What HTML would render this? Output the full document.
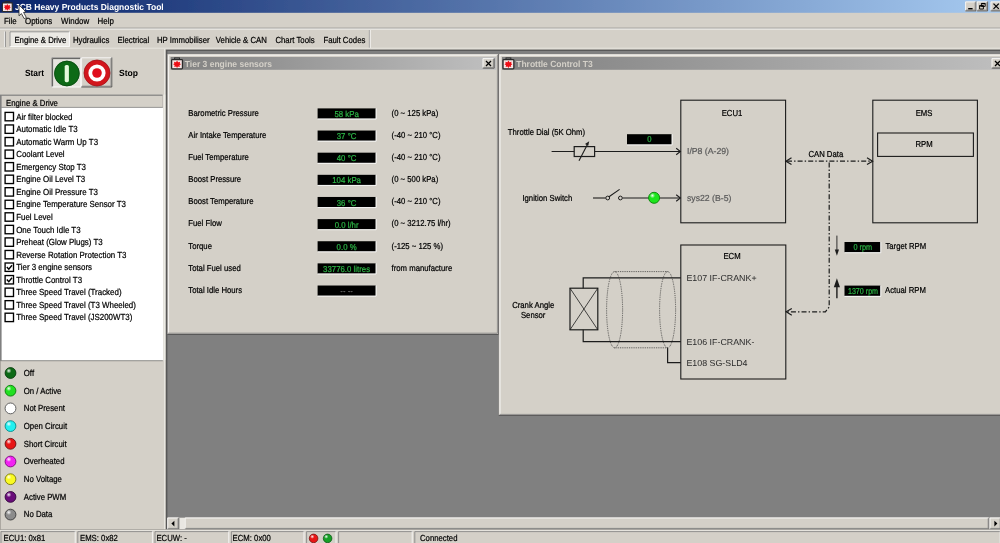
<!DOCTYPE html>
<html><head><meta charset="utf-8"><title>JCB Heavy Products Diagnostic Tool</title>
<style>html,body{margin:0;padding:0;background:#d4d0c8;overflow:hidden}svg{display:block}text{font-family:"Liberation Sans",sans-serif;white-space:pre}</style></head>
<body>
<svg width="1000" height="543" viewBox="0 0 1000 543" text-rendering="geometricPrecision">
<defs><linearGradient id="gt" x1="0" x2="1" y1="0" y2="0"><stop offset="0" stop-color="#0a246a"/><stop offset="1" stop-color="#a6caf0"/></linearGradient><linearGradient id="gi" x1="0" x2="1" y1="0" y2="0"><stop offset="0" stop-color="#808080"/><stop offset="1" stop-color="#c0c0c0"/></linearGradient><radialGradient id="hl" cx=".33" cy=".28" r=".26"><stop offset="0" stop-color="#fff" stop-opacity=".95"/><stop offset="1" stop-color="#fff" stop-opacity="0"/></radialGradient><filter id="b1" x="0" y="0" width="1000" height="543" filterUnits="userSpaceOnUse"><feGaussianBlur stdDeviation=".35"/></filter></defs>
<g filter="url(#b1)">
<rect x="0.00" y="0.00" width="1000.00" height="543.00" fill="#d4d0c8" />
<rect x="0.00" y="0.00" width="1000.00" height="12.80" fill="url(#gt)" />
<g transform="translate(1.80,1.00) scale(0.97)"><rect x="3.4" y=".5" width="4.6" height="2" fill="none" stroke="#2a2a2a" stroke-width=".9"/><rect x=".6" y="2" width="10.2" height="8.8" rx=".8" fill="#f7e6e6" stroke="#2a2a2a" stroke-width="1.2"/><path d="M5.7,3 L6.7,4.6 L8.7,4 L8.2,5.6 L9.4,6.5 L8,7.3 L8.3,9 L6.6,8.5 L5.7,10 L4.8,8.5 L3.1,9 L3.4,7.3 L2,6.5 L3.2,5.6 L2.7,4 L4.7,4.6 Z" fill="#ee1118"/></g>
<text transform="translate(15.00,9.80) scale(0.955,1)" font-size="8.9" fill="#fff" text-anchor="start" font-weight="bold" >JCB Heavy Products Diagnostic Tool</text>
<rect x="965.20" y="1.50" width="11.20" height="9.80" fill="#d4d0c8" />
<path d="M965.60,11.30 V1.90 H976.40" stroke="#ffffff" stroke-width=".8" fill="none"/>
<path d="M965.20,10.90 H976.00 V1.50" stroke="#404040" stroke-width=".8" fill="none"/>
<path d="M966.00,10.10 H975.20 V2.30" stroke="#808080" stroke-width=".8" fill="none"/>
<rect x="976.80" y="1.50" width="11.20" height="9.80" fill="#d4d0c8" />
<path d="M977.20,11.30 V1.90 H988.00" stroke="#ffffff" stroke-width=".8" fill="none"/>
<path d="M976.80,10.90 H987.60 V1.50" stroke="#404040" stroke-width=".8" fill="none"/>
<path d="M977.60,10.10 H986.80 V2.30" stroke="#808080" stroke-width=".8" fill="none"/>
<rect x="990.60" y="1.50" width="11.20" height="9.80" fill="#d4d0c8" />
<path d="M991.00,11.30 V1.90 H1001.80" stroke="#ffffff" stroke-width=".8" fill="none"/>
<path d="M990.60,10.90 H1001.40 V1.50" stroke="#404040" stroke-width=".8" fill="none"/>
<path d="M991.40,10.10 H1000.60 V2.30" stroke="#808080" stroke-width=".8" fill="none"/>
<line x1="968.20" y1="8.70" x2="972.60" y2="8.70" stroke="#000" stroke-width="1.4" />
<path d="M981.4,3.4h3.8v3h-3.8z M979.6,5.6h3.8v3.4h-3.8z" fill="#d4d0c8" stroke="#000" stroke-width=".9"/><path d="M981.4,3.6h3.8 M979.6,5.8h3.8" stroke="#000" stroke-width="1.2"/>
<path d="M993.5,3.6 l5.3,5.3 M998.8,3.6 l-5.3,5.3" stroke="#000" stroke-width="1.3" fill="none"/>
<text transform="translate(4.00,23.62) scale(0.9,1)" font-size="8.8" fill="#000" text-anchor="start" stroke="#000" stroke-width=".22" >File</text>
<text transform="translate(25.00,23.62) scale(0.9,1)" font-size="8.8" fill="#000" text-anchor="start" stroke="#000" stroke-width=".22" >Options</text>
<text transform="translate(61.00,23.62) scale(0.9,1)" font-size="8.8" fill="#000" text-anchor="start" stroke="#000" stroke-width=".22" >Window</text>
<text transform="translate(97.60,23.62) scale(0.9,1)" font-size="8.8" fill="#000" text-anchor="start" stroke="#000" stroke-width=".22" >Help</text>
<line x1="0.00" y1="28.20" x2="1000.00" y2="28.20" stroke="#808080" stroke-width="0.8" />
<line x1="0.00" y1="29.00" x2="1000.00" y2="29.00" stroke="#ffffff" stroke-width="0.8" />
<line x1="4.60" y1="31.50" x2="4.60" y2="47.00" stroke="#ffffff" stroke-width="0.8" />
<line x1="5.40" y1="31.50" x2="5.40" y2="47.00" stroke="#808080" stroke-width="0.8" />
<rect x="9.60" y="31.40" width="60.20" height="15.40" fill="#ebe9e4" />
<path d="M10,46.8 V31.8 H69.8" stroke="#808080" stroke-width=".8" fill="none"/>
<path d="M9.6,46.6 H69.4 V31.4" stroke="#fff" stroke-width=".8" fill="none"/>
<text transform="translate(14.40,43.32) scale(0.885,1)" font-size="8.8" fill="#000" text-anchor="start" stroke="#000" stroke-width=".22" >Engine &amp; Drive</text>
<text transform="translate(73.00,43.32) scale(0.885,1)" font-size="8.8" fill="#000" text-anchor="start" stroke="#000" stroke-width=".22" >Hydraulics</text>
<text transform="translate(117.60,43.32) scale(0.885,1)" font-size="8.8" fill="#000" text-anchor="start" stroke="#000" stroke-width=".22" >Electrical</text>
<text transform="translate(157.00,43.32) scale(0.885,1)" font-size="8.8" fill="#000" text-anchor="start" stroke="#000" stroke-width=".22" >HP Immobiliser</text>
<text transform="translate(215.80,43.32) scale(0.885,1)" font-size="8.8" fill="#000" text-anchor="start" stroke="#000" stroke-width=".22" >Vehicle &amp; CAN</text>
<text transform="translate(275.40,43.32) scale(0.885,1)" font-size="8.8" fill="#000" text-anchor="start" stroke="#000" stroke-width=".22" >Chart Tools</text>
<text transform="translate(323.40,43.32) scale(0.885,1)" font-size="8.8" fill="#000" text-anchor="start" stroke="#000" stroke-width=".22" >Fault Codes</text>
<line x1="369.40" y1="30.00" x2="369.40" y2="48.00" stroke="#808080" stroke-width="0.8" />
<line x1="370.20" y1="30.00" x2="370.20" y2="48.00" stroke="#ffffff" stroke-width="0.8" />
<line x1="0.00" y1="48.20" x2="1000.00" y2="48.20" stroke="#eceae4" stroke-width="0.8" />
<text transform="translate(25.00,75.54) scale(0.93,1)" font-size="9" fill="#000" text-anchor="start" font-weight="bold" >Start</text>
<text transform="translate(119.00,75.54) scale(0.95,1)" font-size="9" fill="#000" text-anchor="start" font-weight="bold" >Stop</text>
<rect x="51.40" y="57.40" width="29.80" height="30.00" fill="#e6e4df" />
<path d="M51.80,87.40 V57.80 H81.20" stroke="#808080" stroke-width=".8" fill="none"/>
<path d="M52.60,86.60 V58.60 H80.40" stroke="#404040" stroke-width=".8" fill="none"/>
<path d="M51.40,87.00 H80.80 V57.40" stroke="#ffffff" stroke-width=".8" fill="none"/>
<rect x="81.20" y="57.40" width="31.00" height="30.00" fill="#d4d0c8" />
<path d="M81.60,87.40 V57.80 H112.20" stroke="#ffffff" stroke-width=".8" fill="none"/>
<path d="M81.20,87.00 H111.80 V57.40" stroke="#404040" stroke-width=".8" fill="none"/>
<path d="M82.00,86.20 H111.00 V58.20" stroke="#808080" stroke-width=".8" fill="none"/>
<circle cx="66.9" cy="73.5" r="12.7" fill="#0f6a17"/>
<circle cx="66.9" cy="73.5" r="12.3" fill="none" stroke="#0a4a10" stroke-width=".8"/>
<rect x="64.70" y="65.00" width="4.20" height="17.20" fill="#e4fadc" rx="1.6"/>
<circle cx="97" cy="73" r="13" fill="#d2141c" stroke="#a01016" stroke-width=".8"/>
<circle cx="97" cy="73" r="8.6" fill="#fff"/>
<circle cx="97" cy="73" r="4.8" fill="#e0101a"/>
<rect x="0.00" y="94.60" width="162.60" height="266.60" fill="#808080" />
<rect x="1.60" y="95.80" width="161.00" height="11.60" fill="#d4d0c8" />
<line x1="1.60" y1="107.40" x2="162.60" y2="107.40" stroke="#808080" stroke-width="0.8" />
<rect x="1.60" y="107.80" width="161.60" height="252.60" fill="#fff" />
<rect x="163.20" y="94.60" width="2.60" height="265.40" fill="#e6e4de" />
<line x1="164.60" y1="49.00" x2="164.60" y2="530.00" stroke="#efede8" stroke-width="0.8" />
<text transform="translate(6.00,105.62) scale(0.885,1)" font-size="8.8" fill="#000" text-anchor="start" stroke="#000" stroke-width=".22" >Engine &amp; Drive</text>
<rect x="5.1" y="112.40" width="8.4" height="8.4" fill="#fff" stroke="#000" stroke-width="1.35"/>
<text transform="translate(16.20,119.62) scale(0.9,1)" font-size="8.8" fill="#000" text-anchor="start" stroke="#000" stroke-width=".22" >Air filter blocked</text>
<rect x="5.1" y="124.95" width="8.4" height="8.4" fill="#fff" stroke="#000" stroke-width="1.35"/>
<text transform="translate(16.20,132.17) scale(0.9,1)" font-size="8.8" fill="#000" text-anchor="start" stroke="#000" stroke-width=".22" >Automatic Idle T3</text>
<rect x="5.1" y="137.50" width="8.4" height="8.4" fill="#fff" stroke="#000" stroke-width="1.35"/>
<text transform="translate(16.20,144.72) scale(0.9,1)" font-size="8.8" fill="#000" text-anchor="start" stroke="#000" stroke-width=".22" >Automatic Warm Up T3</text>
<rect x="5.1" y="150.05" width="8.4" height="8.4" fill="#fff" stroke="#000" stroke-width="1.35"/>
<text transform="translate(16.20,157.27) scale(0.9,1)" font-size="8.8" fill="#000" text-anchor="start" stroke="#000" stroke-width=".22" >Coolant Level</text>
<rect x="5.1" y="162.60" width="8.4" height="8.4" fill="#fff" stroke="#000" stroke-width="1.35"/>
<text transform="translate(16.20,169.82) scale(0.9,1)" font-size="8.8" fill="#000" text-anchor="start" stroke="#000" stroke-width=".22" >Emergency Stop T3</text>
<rect x="5.1" y="175.15" width="8.4" height="8.4" fill="#fff" stroke="#000" stroke-width="1.35"/>
<text transform="translate(16.20,182.37) scale(0.9,1)" font-size="8.8" fill="#000" text-anchor="start" stroke="#000" stroke-width=".22" >Engine Oil Level T3</text>
<rect x="5.1" y="187.70" width="8.4" height="8.4" fill="#fff" stroke="#000" stroke-width="1.35"/>
<text transform="translate(16.20,194.92) scale(0.9,1)" font-size="8.8" fill="#000" text-anchor="start" stroke="#000" stroke-width=".22" >Engine Oil Pressure T3</text>
<rect x="5.1" y="200.25" width="8.4" height="8.4" fill="#fff" stroke="#000" stroke-width="1.35"/>
<text transform="translate(16.20,207.47) scale(0.9,1)" font-size="8.8" fill="#000" text-anchor="start" stroke="#000" stroke-width=".22" >Engine Temperature Sensor T3</text>
<rect x="5.1" y="212.80" width="8.4" height="8.4" fill="#fff" stroke="#000" stroke-width="1.35"/>
<text transform="translate(16.20,220.02) scale(0.9,1)" font-size="8.8" fill="#000" text-anchor="start" stroke="#000" stroke-width=".22" >Fuel Level</text>
<rect x="5.1" y="225.35" width="8.4" height="8.4" fill="#fff" stroke="#000" stroke-width="1.35"/>
<text transform="translate(16.20,232.57) scale(0.9,1)" font-size="8.8" fill="#000" text-anchor="start" stroke="#000" stroke-width=".22" >One Touch Idle T3</text>
<rect x="5.1" y="237.90" width="8.4" height="8.4" fill="#fff" stroke="#000" stroke-width="1.35"/>
<text transform="translate(16.20,245.12) scale(0.9,1)" font-size="8.8" fill="#000" text-anchor="start" stroke="#000" stroke-width=".22" >Preheat (Glow Plugs) T3</text>
<rect x="5.1" y="250.45" width="8.4" height="8.4" fill="#fff" stroke="#000" stroke-width="1.35"/>
<text transform="translate(16.20,257.67) scale(0.9,1)" font-size="8.8" fill="#000" text-anchor="start" stroke="#000" stroke-width=".22" >Reverse Rotation Protection T3</text>
<rect x="5.1" y="263.00" width="8.4" height="8.4" fill="#fff" stroke="#000" stroke-width="1.35"/>
<path d="M6.8,267.00 l2,2.2 l3.2,-4" stroke="#000" stroke-width="1.4" fill="none"/>
<text transform="translate(16.20,270.22) scale(0.9,1)" font-size="8.8" fill="#000" text-anchor="start" stroke="#000" stroke-width=".22" >Tier 3 engine sensors</text>
<rect x="5.1" y="275.55" width="8.4" height="8.4" fill="#fff" stroke="#000" stroke-width="1.35"/>
<path d="M6.8,279.55 l2,2.2 l3.2,-4" stroke="#000" stroke-width="1.4" fill="none"/>
<text transform="translate(16.20,282.77) scale(0.9,1)" font-size="8.8" fill="#000" text-anchor="start" stroke="#000" stroke-width=".22" >Throttle Control T3</text>
<rect x="5.1" y="288.10" width="8.4" height="8.4" fill="#fff" stroke="#000" stroke-width="1.35"/>
<text transform="translate(16.20,295.32) scale(0.9,1)" font-size="8.8" fill="#000" text-anchor="start" stroke="#000" stroke-width=".22" >Three Speed Travel (Tracked)</text>
<rect x="5.1" y="300.65" width="8.4" height="8.4" fill="#fff" stroke="#000" stroke-width="1.35"/>
<text transform="translate(16.20,307.87) scale(0.9,1)" font-size="8.8" fill="#000" text-anchor="start" stroke="#000" stroke-width=".22" >Three Speed Travel (T3 Wheeled)</text>
<rect x="5.1" y="313.20" width="8.4" height="8.4" fill="#fff" stroke="#000" stroke-width="1.35"/>
<text transform="translate(16.20,320.42) scale(0.9,1)" font-size="8.8" fill="#000" text-anchor="start" stroke="#000" stroke-width=".22" >Three Speed Travel (JS200WT3)</text>
<line x1="0.00" y1="361.00" x2="163.00" y2="361.00" stroke="#8c8a84" stroke-width="0.8" />
<rect x="0.00" y="361.40" width="163.20" height="169.00" fill="#d4d0c8" />
<line x1="0.40" y1="361.00" x2="0.40" y2="530.00" stroke="#9a9892" stroke-width="0.8" />
<circle cx="10.5" cy="373.00" r="5.4" fill="#0f6a17" stroke="#063b0a" stroke-width=".9"/>
<circle cx="10.5" cy="373.00" r="5" fill="url(#hl)"/>
<text transform="translate(23.80,375.82) scale(0.885,1)" font-size="8.8" fill="#000" text-anchor="start" stroke="#000" stroke-width=".22" >Off</text>
<circle cx="10.5" cy="390.70" r="5.4" fill="#22e022" stroke="#0a7a0a" stroke-width=".9"/>
<circle cx="10.5" cy="390.70" r="5" fill="url(#hl)"/>
<text transform="translate(23.80,393.52) scale(0.885,1)" font-size="8.8" fill="#000" text-anchor="start" stroke="#000" stroke-width=".22" >On / Active</text>
<circle cx="10.5" cy="408.40" r="5.4" fill="#ffffff" stroke="#555" stroke-width=".9"/>
<circle cx="10.5" cy="408.40" r="5" fill="url(#hl)"/>
<text transform="translate(23.80,411.22) scale(0.885,1)" font-size="8.8" fill="#000" text-anchor="start" stroke="#000" stroke-width=".22" >Not Present</text>
<circle cx="10.5" cy="426.10" r="5.4" fill="#22f0f0" stroke="#0a8a8a" stroke-width=".9"/>
<circle cx="10.5" cy="426.10" r="5" fill="url(#hl)"/>
<text transform="translate(23.80,428.92) scale(0.885,1)" font-size="8.8" fill="#000" text-anchor="start" stroke="#000" stroke-width=".22" >Open Circuit</text>
<circle cx="10.5" cy="443.80" r="5.4" fill="#e81818" stroke="#6a0a0a" stroke-width=".9"/>
<circle cx="10.5" cy="443.80" r="5" fill="url(#hl)"/>
<text transform="translate(23.80,446.62) scale(0.885,1)" font-size="8.8" fill="#000" text-anchor="start" stroke="#000" stroke-width=".22" >Short Circuit</text>
<circle cx="10.5" cy="461.50" r="5.4" fill="#f222f2" stroke="#7a0a7a" stroke-width=".9"/>
<circle cx="10.5" cy="461.50" r="5" fill="url(#hl)"/>
<text transform="translate(23.80,464.32) scale(0.885,1)" font-size="8.8" fill="#000" text-anchor="start" stroke="#000" stroke-width=".22" >Overheated</text>
<circle cx="10.5" cy="479.20" r="5.4" fill="#fafa22" stroke="#7a7a0a" stroke-width=".9"/>
<circle cx="10.5" cy="479.20" r="5" fill="url(#hl)"/>
<text transform="translate(23.80,482.02) scale(0.885,1)" font-size="8.8" fill="#000" text-anchor="start" stroke="#000" stroke-width=".22" >No Voltage</text>
<circle cx="10.5" cy="496.90" r="5.4" fill="#6a0a7a" stroke="#30053a" stroke-width=".9"/>
<circle cx="10.5" cy="496.90" r="5" fill="url(#hl)"/>
<text transform="translate(23.80,499.72) scale(0.885,1)" font-size="8.8" fill="#000" text-anchor="start" stroke="#000" stroke-width=".22" >Active PWM</text>
<circle cx="10.5" cy="514.60" r="5.4" fill="#8c8c8c" stroke="#3a3a3a" stroke-width=".9"/>
<circle cx="10.5" cy="514.60" r="5" fill="url(#hl)"/>
<text transform="translate(23.80,517.42) scale(0.885,1)" font-size="8.8" fill="#000" text-anchor="start" stroke="#000" stroke-width=".22" >No Data</text>
<rect x="165.80" y="49.60" width="834.20" height="480.80" fill="#585858" />
<rect x="167.40" y="51.00" width="832.60" height="466.60" fill="#808080" />
<rect x="167.40" y="517.60" width="832.60" height="12.00" fill="#e9e7e2" />
<rect x="167.40" y="517.60" width="11.80" height="12.00" fill="#d4d0c8" />
<path d="M167.80,529.60 V518.00 H179.20" stroke="#ffffff" stroke-width=".8" fill="none"/>
<path d="M167.40,529.20 H178.80 V517.60" stroke="#404040" stroke-width=".8" fill="none"/>
<path d="M168.20,528.40 H178.00 V518.40" stroke="#808080" stroke-width=".8" fill="none"/>
<path d="M174.4,520.8 v5.6 l-3,-2.8z" fill="#000"/>
<rect x="184.80" y="517.60" width="804.60" height="12.00" fill="#d4d0c8" />
<path d="M185.20,529.60 V518.00 H989.40" stroke="#ffffff" stroke-width=".8" fill="none"/>
<path d="M184.80,529.20 H989.00 V517.60" stroke="#404040" stroke-width=".8" fill="none"/>
<path d="M185.60,528.40 H988.20 V518.40" stroke="#808080" stroke-width=".8" fill="none"/>
<rect x="989.60" y="517.60" width="11.80" height="12.00" fill="#d4d0c8" />
<path d="M990.00,529.60 V518.00 H1001.40" stroke="#ffffff" stroke-width=".8" fill="none"/>
<path d="M989.60,529.20 H1001.00 V517.60" stroke="#404040" stroke-width=".8" fill="none"/>
<path d="M990.40,528.40 H1000.20 V518.40" stroke="#808080" stroke-width=".8" fill="none"/>
<path d="M994.4,520.8 v5.6 l3,-2.8z" fill="#000"/>
<line x1="165.80" y1="530.00" x2="1000.00" y2="530.00" stroke="#ffffff" stroke-width="0.8" />
<rect x="167.40" y="54.00" width="331.60" height="280.80" fill="#505050" />
<rect x="167.40" y="54.00" width="330.70" height="279.90" fill="#d4d0c8" />
<path d="M168.60,333.20 V55.20 H497.40" stroke="#fff" stroke-width=".8" fill="none"/>
<path d="M168.20,333.20 H497.40 V54.80" stroke="#808080" stroke-width=".8" fill="none"/>
<rect x="170.60" y="57.00" width="325.60" height="12.80" fill="url(#gi)" />
<g transform="translate(171.00,57.40) scale(1.06)"><rect x="3.4" y=".5" width="4.6" height="2" fill="none" stroke="#2a2a2a" stroke-width=".9"/><rect x=".6" y="2" width="10.2" height="8.8" rx=".8" fill="#f7e6e6" stroke="#2a2a2a" stroke-width="1.2"/><path d="M5.7,3 L6.7,4.6 L8.7,4 L8.2,5.6 L9.4,6.5 L8,7.3 L8.3,9 L6.6,8.5 L5.7,10 L4.8,8.5 L3.1,9 L3.4,7.3 L2,6.5 L3.2,5.6 L2.7,4 L4.7,4.6 Z" fill="#ee1118"/></g>
<text transform="translate(184.80,67.10) scale(0.958,1)" font-size="8.9" fill="#d4d0c8" text-anchor="start" font-weight="bold" >Tier 3 engine sensors</text>
<rect x="482.60" y="58.20" width="12.00" height="10.40" fill="#d4d0c8" />
<path d="M483.00,68.60 V58.60 H494.60" stroke="#ffffff" stroke-width=".8" fill="none"/>
<path d="M482.60,68.20 H494.20 V58.20" stroke="#404040" stroke-width=".8" fill="none"/>
<path d="M483.40,67.40 H493.40 V59.00" stroke="#808080" stroke-width=".8" fill="none"/>
<path d="M486.00,61.00 l5,5 M491.00,61.00 l-5,5" stroke="#000" stroke-width="1.3" fill="none"/>
<text transform="translate(188.30,115.78) scale(0.89,1)" font-size="8.7" fill="#000" text-anchor="start" stroke="#000" stroke-width=".22" >Barometric Pressure</text>
<rect x="317.60" y="108.40" width="58.20" height="10.30" fill="#000" />
<path d="M317.60,119.00 H376.10 V108.40" stroke="#fff" stroke-width=".9" fill="none"/>
<text transform="translate(346.60,116.95) scale(0.91,1)" font-size="8.6" fill="#2db446" text-anchor="middle" stroke="#2db446" stroke-width=".22" >58 kPa</text>
<text transform="translate(391.60,115.78) scale(0.89,1)" font-size="8.7" fill="#000" text-anchor="start" stroke="#000" stroke-width=".22" >(0 ~ 125 kPa)</text>
<text transform="translate(188.30,137.92) scale(0.89,1)" font-size="8.7" fill="#000" text-anchor="start" stroke="#000" stroke-width=".22" >Air Intake Temperature</text>
<rect x="317.60" y="130.54" width="58.20" height="10.30" fill="#000" />
<path d="M317.60,141.14 H376.10 V130.54" stroke="#fff" stroke-width=".9" fill="none"/>
<text transform="translate(346.60,139.09) scale(0.91,1)" font-size="8.6" fill="#2db446" text-anchor="middle" stroke="#2db446" stroke-width=".22" >37 °C</text>
<text transform="translate(391.60,137.92) scale(0.89,1)" font-size="8.7" fill="#000" text-anchor="start" stroke="#000" stroke-width=".22" >(-40 ~ 210 °C)</text>
<text transform="translate(188.30,160.06) scale(0.89,1)" font-size="8.7" fill="#000" text-anchor="start" stroke="#000" stroke-width=".22" >Fuel Temperature</text>
<rect x="317.60" y="152.68" width="58.20" height="10.30" fill="#000" />
<path d="M317.60,163.28 H376.10 V152.68" stroke="#fff" stroke-width=".9" fill="none"/>
<text transform="translate(346.60,161.23) scale(0.91,1)" font-size="8.6" fill="#2db446" text-anchor="middle" stroke="#2db446" stroke-width=".22" >40 °C</text>
<text transform="translate(391.60,160.06) scale(0.89,1)" font-size="8.7" fill="#000" text-anchor="start" stroke="#000" stroke-width=".22" >(-40 ~ 210 °C)</text>
<text transform="translate(188.30,182.20) scale(0.89,1)" font-size="8.7" fill="#000" text-anchor="start" stroke="#000" stroke-width=".22" >Boost Pressure</text>
<rect x="317.60" y="174.82" width="58.20" height="10.30" fill="#000" />
<path d="M317.60,185.42 H376.10 V174.82" stroke="#fff" stroke-width=".9" fill="none"/>
<text transform="translate(346.60,183.37) scale(0.91,1)" font-size="8.6" fill="#2db446" text-anchor="middle" stroke="#2db446" stroke-width=".22" >104 kPa</text>
<text transform="translate(391.60,182.20) scale(0.89,1)" font-size="8.7" fill="#000" text-anchor="start" stroke="#000" stroke-width=".22" >(0 ~ 500 kPa)</text>
<text transform="translate(188.30,204.34) scale(0.89,1)" font-size="8.7" fill="#000" text-anchor="start" stroke="#000" stroke-width=".22" >Boost Temperature</text>
<rect x="317.60" y="196.96" width="58.20" height="10.30" fill="#000" />
<path d="M317.60,207.56 H376.10 V196.96" stroke="#fff" stroke-width=".9" fill="none"/>
<text transform="translate(346.60,205.51) scale(0.91,1)" font-size="8.6" fill="#2db446" text-anchor="middle" stroke="#2db446" stroke-width=".22" >36 °C</text>
<text transform="translate(391.60,204.34) scale(0.89,1)" font-size="8.7" fill="#000" text-anchor="start" stroke="#000" stroke-width=".22" >(-40 ~ 210 °C)</text>
<text transform="translate(188.30,226.48) scale(0.89,1)" font-size="8.7" fill="#000" text-anchor="start" stroke="#000" stroke-width=".22" >Fuel Flow</text>
<rect x="317.60" y="219.10" width="58.20" height="10.30" fill="#000" />
<path d="M317.60,229.70 H376.10 V219.10" stroke="#fff" stroke-width=".9" fill="none"/>
<text transform="translate(346.60,227.65) scale(0.91,1)" font-size="8.6" fill="#2db446" text-anchor="middle" stroke="#2db446" stroke-width=".22" >0.0 l/hr</text>
<text transform="translate(391.60,226.48) scale(0.89,1)" font-size="8.7" fill="#000" text-anchor="start" stroke="#000" stroke-width=".22" >(0 ~ 3212.75 l/hr)</text>
<text transform="translate(188.30,248.62) scale(0.89,1)" font-size="8.7" fill="#000" text-anchor="start" stroke="#000" stroke-width=".22" >Torque</text>
<rect x="317.60" y="241.24" width="58.20" height="10.30" fill="#000" />
<path d="M317.60,251.84 H376.10 V241.24" stroke="#fff" stroke-width=".9" fill="none"/>
<text transform="translate(346.60,249.79) scale(0.91,1)" font-size="8.6" fill="#2db446" text-anchor="middle" stroke="#2db446" stroke-width=".22" >0.0 %</text>
<text transform="translate(391.60,248.62) scale(0.89,1)" font-size="8.7" fill="#000" text-anchor="start" stroke="#000" stroke-width=".22" >(-125 ~ 125 %)</text>
<text transform="translate(188.30,270.76) scale(0.89,1)" font-size="8.7" fill="#000" text-anchor="start" stroke="#000" stroke-width=".22" >Total Fuel used</text>
<rect x="317.60" y="263.38" width="58.20" height="10.30" fill="#000" />
<path d="M317.60,273.98 H376.10 V263.38" stroke="#fff" stroke-width=".9" fill="none"/>
<text transform="translate(346.60,271.93) scale(0.91,1)" font-size="8.6" fill="#2db446" text-anchor="middle" stroke="#2db446" stroke-width=".22" >33776.0 litres</text>
<text transform="translate(391.60,270.76) scale(0.89,1)" font-size="8.7" fill="#000" text-anchor="start" stroke="#000" stroke-width=".22" >from manufacture</text>
<text transform="translate(188.30,292.90) scale(0.89,1)" font-size="8.7" fill="#000" text-anchor="start" stroke="#000" stroke-width=".22" >Total Idle Hours</text>
<rect x="317.60" y="285.52" width="58.20" height="10.30" fill="#000" />
<path d="M317.60,296.12 H376.10 V285.52" stroke="#fff" stroke-width=".9" fill="none"/>
<text transform="translate(346.60,294.07) scale(0.91,1)" font-size="8.6" fill="#8a8a8a" text-anchor="middle" >-- --</text>
<rect x="498.80" y="54.00" width="520.00" height="362.00" fill="#505050" />
<rect x="498.80" y="54.00" width="519.10" height="361.10" fill="#d4d0c8" />
<path d="M500.00,414.40 V55.20 H1017.20" stroke="#fff" stroke-width=".8" fill="none"/>
<path d="M499.60,414.40 H1017.20 V54.80" stroke="#808080" stroke-width=".8" fill="none"/>
<rect x="502.00" y="57.00" width="514.00" height="12.80" fill="url(#gi)" />
<g transform="translate(502.40,57.40) scale(1.06)"><rect x="3.4" y=".5" width="4.6" height="2" fill="none" stroke="#2a2a2a" stroke-width=".9"/><rect x=".6" y="2" width="10.2" height="8.8" rx=".8" fill="#f7e6e6" stroke="#2a2a2a" stroke-width="1.2"/><path d="M5.7,3 L6.7,4.6 L8.7,4 L8.2,5.6 L9.4,6.5 L8,7.3 L8.3,9 L6.6,8.5 L5.7,10 L4.8,8.5 L3.1,9 L3.4,7.3 L2,6.5 L3.2,5.6 L2.7,4 L4.7,4.6 Z" fill="#ee1118"/></g>
<text transform="translate(516.20,67.10) scale(0.958,1)" font-size="8.9" fill="#d4d0c8" text-anchor="start" font-weight="bold" >Throttle Control T3</text>
<rect x="991.60" y="58.20" width="12.00" height="10.40" fill="#d4d0c8" />
<path d="M992.00,68.60 V58.60 H1003.60" stroke="#ffffff" stroke-width=".8" fill="none"/>
<path d="M991.60,68.20 H1003.20 V58.20" stroke="#404040" stroke-width=".8" fill="none"/>
<path d="M992.40,67.40 H1002.40 V59.00" stroke="#808080" stroke-width=".8" fill="none"/>
<path d="M995.00,61.00 l5,5 M1000.00,61.00 l-5,5" stroke="#000" stroke-width="1.3" fill="none"/>
<rect x="680.80" y="100.20" width="104.80" height="122.60" fill="none" stroke="#1c1c1c" stroke-width="1.1"/>
<rect x="872.80" y="100.20" width="104.60" height="122.60" fill="none" stroke="#1c1c1c" stroke-width="1.1"/>
<rect x="877.60" y="133.00" width="95.80" height="23.40" fill="none" stroke="#1c1c1c" stroke-width="1.1"/>
<rect x="680.80" y="245.00" width="105.00" height="134.00" fill="none" stroke="#1c1c1c" stroke-width="1.1"/>
<text transform="translate(732.00,115.78) scale(0.89,1)" font-size="8.7" fill="#000" text-anchor="middle" stroke="#000" stroke-width=".22" >ECU1</text>
<text transform="translate(924.00,115.78) scale(0.89,1)" font-size="8.7" fill="#000" text-anchor="middle" stroke="#000" stroke-width=".22" >EMS</text>
<text transform="translate(924.00,147.18) scale(0.89,1)" font-size="8.7" fill="#000" text-anchor="middle" stroke="#000" stroke-width=".22" >RPM</text>
<text transform="translate(732.00,258.98) scale(0.89,1)" font-size="8.7" fill="#000" text-anchor="middle" stroke="#000" stroke-width=".22" >ECM</text>
<text transform="translate(507.80,134.58) scale(0.89,1)" font-size="8.7" fill="#000" text-anchor="start" stroke="#000" stroke-width=".22" >Throttle Dial (5K Ohm)</text>
<line x1="551.60" y1="151.50" x2="680.20" y2="151.50" stroke="#1c1c1c" stroke-width="1.1" />
<path d="M676.20,148.20 L680.40,151.50 L676.20,154.80" stroke="#1c1c1c" stroke-width="1.1" fill="none"/>
<rect x="574.2" y="146.6" width="20.4" height="9.9" fill="#d4d0c8" stroke="#1c1c1c" stroke-width="1.2"/>
<line x1="579.00" y1="160.80" x2="587.80" y2="143.80" stroke="#1c1c1c" stroke-width="1.1" />
<path d="M589.2,141.2 l-4.2,2.8 l3.2,1.8z" fill="#1c1c1c"/>
<rect x="627.00" y="134.20" width="44.80" height="10.40" fill="#000" />
<path d="M627.00,144.90 H672.10 V134.20" stroke="#fff" stroke-width=".9" fill="none"/>
<text transform="translate(649.30,142.45) scale(0.9,1)" font-size="8.6" fill="#2db446" text-anchor="middle" stroke="#2db446" stroke-width=".22" >0</text>
<text transform="translate(687.00,154.28) scale(1.0,1)" font-size="8.7" fill="#5c5c5c" text-anchor="start" stroke="#5c5c5c" stroke-width=".22" >I/P8 (A-29)</text>
<text transform="translate(522.40,200.98) scale(0.89,1)" font-size="8.7" fill="#000" text-anchor="start" stroke="#000" stroke-width=".22" >Ignition Switch</text>
<line x1="593.00" y1="198.00" x2="605.60" y2="198.00" stroke="#1c1c1c" stroke-width="1.1" />
<line x1="622.60" y1="198.00" x2="680.20" y2="198.00" stroke="#1c1c1c" stroke-width="1.1" />
<path d="M676.20,194.70 L680.40,198.00 L676.20,201.30" stroke="#1c1c1c" stroke-width="1.1" fill="none"/>
<circle cx="607.7" cy="198" r="1.9" fill="#d4d0c8" stroke="#1c1c1c" stroke-width="1"/>
<circle cx="620.4" cy="198" r="1.9" fill="#d4d0c8" stroke="#1c1c1c" stroke-width="1"/>
<line x1="609.00" y1="196.80" x2="619.60" y2="189.40" stroke="#1c1c1c" stroke-width="1.1" />
<circle cx="654.1" cy="197.8" r="5.5" fill="#1fe61f" stroke="#0c8a0c" stroke-width="1"/>
<circle cx="654.1" cy="197.8" r="5" fill="url(#hl)"/>
<text transform="translate(687.00,200.98) scale(1.0,1)" font-size="8.7" fill="#5c5c5c" text-anchor="start" stroke="#5c5c5c" stroke-width=".22" >sys22 (B-5)</text>
<text transform="translate(808.40,156.68) scale(0.89,1)" font-size="8.7" fill="#000" text-anchor="start" stroke="#000" stroke-width=".22" >CAN Data</text>
<line x1="787.00" y1="161.20" x2="871.60" y2="161.20" stroke="#1c1c1c" stroke-width="1.2" stroke-dasharray="5 2.1 1.4 2.1"/>
<path d="M791.50,157.80 L785.90,161.20 L791.50,164.60" stroke="#1c1c1c" stroke-width="1.2" fill="none"/>
<path d="M867.00,157.80 L872.60,161.20 L867.00,164.60" stroke="#1c1c1c" stroke-width="1.2" fill="none"/>
<path d="M829.2,162.4 V307 L825.4,311.8 H787.2" fill="none" stroke="#1c1c1c" stroke-width="1.2" stroke-dasharray="5 2.1 1.4 2.1"/>
<path d="M791.80,308.40 L786.20,311.80 L791.80,315.20" stroke="#1c1c1c" stroke-width="1.2" fill="none"/>
<line x1="836.90" y1="235.60" x2="836.90" y2="251.00" stroke="#1c1c1c" stroke-width="0.9" />
<path d="M836.9,255.8 l-2.1,-6.2 h4.2z" fill="#1c1c1c"/>
<rect x="844.50" y="242.00" width="36.00" height="10.40" fill="#000" />
<path d="M844.50,252.70 H880.80 V242.00" stroke="#fff" stroke-width=".9" fill="none"/>
<text transform="translate(862.80,250.25) scale(0.85,1)" font-size="8.6" fill="#2db446" text-anchor="middle" stroke="#2db446" stroke-width=".22" >0 rpm</text>
<text transform="translate(885.40,249.28) scale(0.89,1)" font-size="8.7" fill="#000" text-anchor="start" stroke="#000" stroke-width=".22" >Target RPM</text>
<line x1="836.90" y1="298.20" x2="836.90" y2="286.00" stroke="#1c1c1c" stroke-width="1.4" />
<path d="M836.9,278.2 l-3.1,9 h6.2z" fill="#1c1c1c"/>
<rect x="844.50" y="285.60" width="36.00" height="10.40" fill="#000" />
<path d="M844.50,296.30 H880.80 V285.60" stroke="#fff" stroke-width=".9" fill="none"/>
<text transform="translate(863.00,293.75) scale(0.83,1)" font-size="8.6" fill="#2db446" text-anchor="middle" stroke="#2db446" stroke-width=".22" >1370 rpm</text>
<text transform="translate(885.00,292.58) scale(0.89,1)" font-size="8.7" fill="#000" text-anchor="start" stroke="#000" stroke-width=".22" >Actual RPM</text>
<text transform="translate(686.40,280.58) scale(1.02,1)" font-size="8.7" fill="#2b2b2b" text-anchor="start" >E107 IF-CRANK+</text>
<text transform="translate(686.40,344.78) scale(1.02,1)" font-size="8.7" fill="#2b2b2b" text-anchor="start" >E106 IF-CRANK-</text>
<text transform="translate(686.40,365.78) scale(1.02,1)" font-size="8.7" fill="#2b2b2b" text-anchor="start" >E108 SG-SLD4</text>
<rect x="570.00" y="288.20" width="27.80" height="41.60" fill="none" stroke="#1c1c1c" stroke-width="1.2"/>
<line x1="570.00" y1="288.20" x2="597.80" y2="329.80" stroke="#1c1c1c" stroke-width="0.8" />
<line x1="597.80" y1="288.20" x2="570.00" y2="329.80" stroke="#1c1c1c" stroke-width="0.8" />
<path d="M583.2,288.2 V277.8 H680.8 M583.2,329.8 V341.6 H680.8 M667.6,347.8 V362.6 H680.8" fill="none" stroke="#1c1c1c" stroke-width="1.2"/>
<ellipse cx="614.6" cy="309.7" rx="8" ry="38.1" fill="none" stroke="#333" stroke-width=".8" stroke-dasharray=".9 .9"/>
<ellipse cx="667.6" cy="309.7" rx="8" ry="38.1" fill="none" stroke="#333" stroke-width=".8" stroke-dasharray=".9 .9"/>
<line x1="614.60" y1="271.60" x2="667.60" y2="271.60" stroke="#333" stroke-width="0.8" stroke-dasharray=".9 .9"/>
<line x1="614.60" y1="347.80" x2="667.60" y2="347.80" stroke="#333" stroke-width="0.8" stroke-dasharray=".9 .9"/>
<text transform="translate(533.20,307.98) scale(0.89,1)" font-size="8.7" fill="#000" text-anchor="middle" stroke="#000" stroke-width=".22" >Crank Angle</text>
<text transform="translate(533.20,317.58) scale(0.89,1)" font-size="8.7" fill="#000" text-anchor="middle" stroke="#000" stroke-width=".22" >Sensor</text>
<rect x="0.00" y="530.40" width="1000.00" height="12.60" fill="#d4d0c8" />
<line x1="0.00" y1="529.60" x2="1000.00" y2="529.60" stroke="#9a9891" stroke-width="0.8" />
<line x1="0.00" y1="530.40" x2="1000.00" y2="530.40" stroke="#f0eee8" stroke-width="0.8" />
<path d="M1.00,543 V531.60 H75.60" stroke="#808080" stroke-width=".8" fill="none"/>
<line x1="75.20" y1="531.20" x2="75.20" y2="543.00" stroke="#ffffff" stroke-width="0.8" />
<path d="M77.80,543 V531.60 H152.80" stroke="#808080" stroke-width=".8" fill="none"/>
<line x1="152.40" y1="531.20" x2="152.40" y2="543.00" stroke="#ffffff" stroke-width="0.8" />
<path d="M155.00,543 V531.60 H229.20" stroke="#808080" stroke-width=".8" fill="none"/>
<line x1="228.80" y1="531.20" x2="228.80" y2="543.00" stroke="#ffffff" stroke-width="0.8" />
<path d="M231.40,543 V531.60 H304.40" stroke="#808080" stroke-width=".8" fill="none"/>
<line x1="304.00" y1="531.20" x2="304.00" y2="543.00" stroke="#ffffff" stroke-width="0.8" />
<path d="M306.60,543 V531.60 H336.40" stroke="#808080" stroke-width=".8" fill="none"/>
<line x1="336.00" y1="531.20" x2="336.00" y2="543.00" stroke="#ffffff" stroke-width="0.8" />
<path d="M338.60,543 V531.60 H412.60" stroke="#808080" stroke-width=".8" fill="none"/>
<line x1="412.20" y1="531.20" x2="412.20" y2="543.00" stroke="#ffffff" stroke-width="0.8" />
<path d="M414.80,543 V531.60 H1000.60" stroke="#808080" stroke-width=".8" fill="none"/>
<line x1="1000.20" y1="531.20" x2="1000.20" y2="543.00" stroke="#ffffff" stroke-width="0.8" />
<text transform="translate(3.60,541.42) scale(0.88,1)" font-size="8.8" fill="#000" text-anchor="start" stroke="#000" stroke-width=".22" >ECU1: 0x81</text>
<text transform="translate(80.00,541.42) scale(0.88,1)" font-size="8.8" fill="#000" text-anchor="start" stroke="#000" stroke-width=".22" >EMS: 0x82</text>
<text transform="translate(156.40,541.42) scale(0.88,1)" font-size="8.8" fill="#000" text-anchor="start" stroke="#000" stroke-width=".22" >ECUW: -</text>
<text transform="translate(232.60,541.42) scale(0.88,1)" font-size="8.8" fill="#000" text-anchor="start" stroke="#000" stroke-width=".22" >ECM: 0x00</text>
<text transform="translate(420.00,541.42) scale(0.88,1)" font-size="8.8" fill="#000" text-anchor="start" stroke="#000" stroke-width=".22" >Connected</text>
<circle cx="313.6" cy="538.4" r="4.3" fill="#e81818" stroke="#6a0a0a" stroke-width=".7"/>
<circle cx="313.6" cy="538.4" r="4" fill="url(#hl)"/>
<circle cx="327.6" cy="538.4" r="4.3" fill="#18a028" stroke="#0a4a10" stroke-width=".7"/>
<circle cx="327.6" cy="538.4" r="4" fill="url(#hl)"/>
<path d="M19,5 V15.8 L21.4,13.6 L24.2,18.6 L26.4,17.6 L23.6,12.4 L25.8,11.8 Z" fill="#fff" stroke="#222" stroke-width=".8" stroke-linejoin="round"/>
</g>
</svg>
</body></html>
